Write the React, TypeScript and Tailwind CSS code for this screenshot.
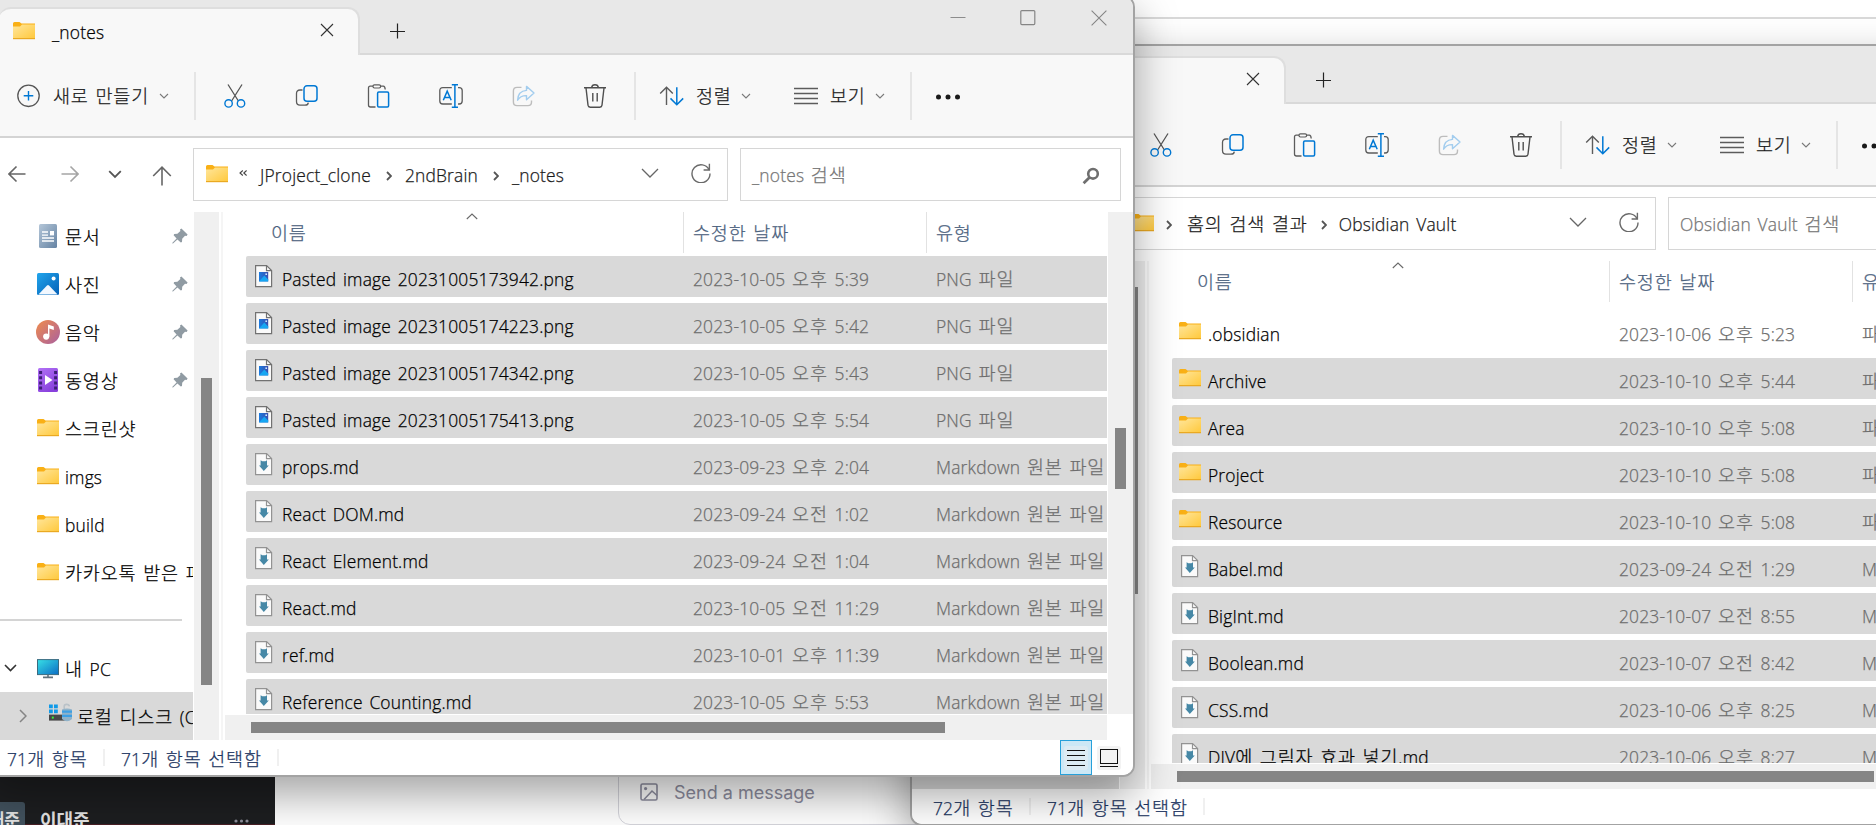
import { ReactNode } from "react";

type FileRow = {
  name: string;
  date: string;
  type: string;
  icon: "png" | "md" | "folder";
  selected: boolean;
};

const notesFiles: FileRow[] = [
  { name: "Pasted image 20231005173942.png", date: "2023-10-05 오후 5:39", type: "PNG 파일", icon: "png", selected: true },
  { name: "Pasted image 20231005174223.png", date: "2023-10-05 오후 5:42", type: "PNG 파일", icon: "png", selected: true },
  { name: "Pasted image 20231005174342.png", date: "2023-10-05 오후 5:43", type: "PNG 파일", icon: "png", selected: true },
  { name: "Pasted image 20231005175413.png", date: "2023-10-05 오후 5:54", type: "PNG 파일", icon: "png", selected: true },
  { name: "props.md", date: "2023-09-23 오후 2:04", type: "Markdown 원본 파일", icon: "md", selected: true },
  { name: "React DOM.md", date: "2023-09-24 오전 1:02", type: "Markdown 원본 파일", icon: "md", selected: true },
  { name: "React Element.md", date: "2023-09-24 오전 1:04", type: "Markdown 원본 파일", icon: "md", selected: true },
  { name: "React.md", date: "2023-10-05 오전 11:29", type: "Markdown 원본 파일", icon: "md", selected: true },
  { name: "ref.md", date: "2023-10-01 오후 11:39", type: "Markdown 원본 파일", icon: "md", selected: true },
  { name: "Reference Counting.md", date: "2023-10-05 오후 5:53", type: "Markdown 원본 파일", icon: "md", selected: true },
];

const vaultFiles: FileRow[] = [
  { name: ".obsidian", date: "2023-10-06 오후 5:23", type: "파일 폴더", icon: "folder", selected: false },
  { name: "Archive", date: "2023-10-10 오후 5:44", type: "파일 폴더", icon: "folder", selected: true },
  { name: "Area", date: "2023-10-10 오후 5:08", type: "파일 폴더", icon: "folder", selected: true },
  { name: "Project", date: "2023-10-10 오후 5:08", type: "파일 폴더", icon: "folder", selected: true },
  { name: "Resource", date: "2023-10-10 오후 5:08", type: "파일 폴더", icon: "folder", selected: true },
  { name: "Babel.md", date: "2023-09-24 오전 1:29", type: "Markdown 원본 파일", icon: "md", selected: true },
  { name: "BigInt.md", date: "2023-10-07 오전 8:55", type: "Markdown 원본 파일", icon: "md", selected: true },
  { name: "Boolean.md", date: "2023-10-07 오전 8:42", type: "Markdown 원본 파일", icon: "md", selected: true },
  { name: "CSS.md", date: "2023-10-06 오후 8:25", type: "Markdown 원본 파일", icon: "md", selected: true },
  { name: "DIV에 그림자 효과 넣기.md", date: "2023-10-06 오후 8:27", type: "Markdown 원본 파일", icon: "md", selected: true },
];

// hangul is a bit bigger than the latin letters, so the two are split
const T = ({ children, className = "" }: { children: string; className?: string }) => {
  const parts = children.split(/([가-힣]+)/).filter((p) => p !== "");
  return (
    <span className={"whitespace-pre leading-[24px] " + className}>
      {parts.map((p, i) =>
        /[가-힣]/.test(p) ? (
          <span key={i} className="font-['Noto_Sans_CJK_KR',sans-serif] text-[18.5px] leading-[20px] font-light tracking-[0.85px] [-webkit-text-stroke:0.25px]">
            {p}
          </span>
        ) : (
          <span key={i} className="font-['Open_Sans','Noto_Sans',sans-serif] text-[17.4px] leading-[20px] font-light tracking-[0.18px] [word-spacing:2px] [-webkit-text-stroke:0.25px]">
            {p}
          </span>
        )
      )}
    </span>
  );
};

const Icon = ({ w, h, className = "", children }: { w: number; h: number; className?: string; children: ReactNode }) => (
  <svg width={w} height={h} viewBox={`0 0 ${w} ${h}`} fill="none" className={"shrink-0 " + className}>
    {children}
  </svg>
);

const Gradients = () => (
  <svg width="0" height="0" className="absolute">
    <defs>
      <linearGradient id="folder" x1="0" y1="0" x2="1" y2="1">
        <stop offset="0" stopColor="#ffe69c" />
        <stop offset="1" stopColor="#ffc83a" />
      </linearGradient>
      <linearGradient id="doc" x1="0" y1="0" x2="1" y2="1">
        <stop offset="0" stopColor="#b4c6d8" />
        <stop offset="1" stopColor="#6583a3" />
      </linearGradient>
      <linearGradient id="photo" x1="0" y1="0" x2="1" y2="1">
        <stop offset="0" stopColor="#21a5ec" />
        <stop offset="1" stopColor="#0560b6" />
      </linearGradient>
      <linearGradient id="music" x1="0" y1="0" x2="1" y2="1">
        <stop offset="0" stopColor="#f08c4c" />
        <stop offset="1" stopColor="#a9609f" />
      </linearGradient>
      <linearGradient id="video" x1="0" y1="0" x2="0.6" y2="1">
        <stop offset="0" stopColor="#b272f6" />
        <stop offset="1" stopColor="#8840dc" />
      </linearGradient>
      <linearGradient id="pc" x1="0" y1="0" x2="1" y2="1">
        <stop offset="0" stopColor="#37e0e6" />
        <stop offset="1" stopColor="#0b6cc4" />
      </linearGradient>
      <linearGradient id="thumb" x1="0" y1="0" x2="1" y2="0">
        <stop offset="0" stopColor="#1b7be0" />
        <stop offset="1" stopColor="#3a4fae" />
      </linearGradient>
    </defs>
  </svg>
);

const FolderIcon = ({ className = "" }) => (
  <Icon w={22} h={18} className={className}>
    <path d="M0 1.5Q0 0 1.5 0H6.5L8.5 1.6H22V8H0z" fill="#f9b016" />
    <path d="M0 4.5H7L9 2.6H22V17H0z" fill="url(#folder)" />
    <path d="M0 16.6H22" stroke="#eaa922" strokeWidth="1.2" />
  </Icon>
);

const FileIcon = ({ kind }: { kind: "png" | "md" }) => (
  <Icon w={18} h={23}>
    <path d="M.6.6H11.6L16.6 5.6V21.6H.6z" fill="#fafafa" stroke={kind === "png" ? "#727272" : "#939393"} strokeWidth="1.2" />
    <path d="M11.5.8V5.6H16.6" stroke={kind === "png" ? "#727272" : "#939393"} strokeWidth="1.2" />
    {kind === "png" ? (
      <>
        <rect x="4" y="7" width="9.2" height="9.4" fill="url(#thumb)" />
        <path d="M4 16.4L9.3 10.6L13.2 14.4V16.4z" fill="#17a6f2" />
        <circle cx="11.2" cy="9.2" r=".9" fill="#cfe8ff" />
      </>
    ) : (
      <path d="M5.6 7.2L7.3 8.3H10.4L12 7.2V12.4H13.8L8.8 18L4 12.4H5.6z" fill="#4688a6" />
    )}
  </Icon>
);

const CaretDown = ({ className = "" }) => (
  <Icon w={10} h={6} className={className}>
    <path d="M1 1L5 5L9 1" stroke="#7a7a7a" strokeWidth="1.1" />
  </Icon>
);

const Divider = ({ className = "" }) => <div className={"h-[48px] w-[2px] shrink-0 bg-[#e5e5e5] " + className}></div>;

const Crumb = () => (
  <Icon w={6} h={10} className="mt-[3px]">
    <path d="M1 1L5 5L1 9" stroke="#555" strokeWidth="1.8" />
  </Icon>
);

const TitleBar = ({ title }: { title: string }) => (
  <div className="flex h-[58px] shrink-0 border-b-2 border-[#d9d9d9] bg-[#e8e8e8]">
    <div className="mt-[10px] ml-[13px] flex h-[48px] w-[361px] shrink-0 items-start rounded-tl-[12px] rounded-tr-[12px] border-t-2 border-r-2 border-[#dedede] bg-[#f8f8f8]">
      <FolderIcon className="mt-[13px] ml-[14px]" />
      <T className="mt-[12px] ml-[17px] w-[268px] text-black">{title}</T>
      <Icon w={14} h={14} className="mt-[14px]">
        <path d="M1 1L13 13M13 1L1 13" stroke="#333" strokeWidth="1.1" />
      </Icon>
    </div>
    <Icon w={16} h={16} className="mt-[26px] ml-[30px]">
      <path d="M7.5 .5V15.5M0 8.5H15" stroke="#222" strokeWidth="1.2" />
    </Icon>
    <div className="mt-[13px] mr-[26px] ml-auto flex h-[16px] gap-[54px]">
      <Icon w={16} h={16}>
        <path d="M.5 7.5H15.5" stroke="#8c8c8c" />
      </Icon>
      <Icon w={16} h={16}>
        <rect x=".8" y=".6" width="14" height="14" rx="1" stroke="#858585" strokeWidth="1.2" />
      </Icon>
      <Icon w={16} h={16} className="ml-[1px]">
        <path d="M.6 .6L15.4 15.4M15.4 .6L.6 15.4" stroke="#858585" strokeWidth="1.1" />
      </Icon>
    </div>
  </div>
);

const Toolbar = () => (
  <div className="flex h-[83px] shrink-0 items-center border-b-2 border-[#d4d4d4] bg-[#f8f8f8] pl-[31px] text-[#1a1a1a]">
    <Icon w={24} h={24}>
      <circle cx="11.5" cy="11.8" r="10.7" stroke="#555" strokeWidth="1.3" />
      <path d="M11.5 7V16.6M6.7 11.8H16.3" stroke="#0078d4" strokeWidth="1.4" />
    </Icon>
    <T className="mt-[2px] ml-[12px] w-[106px]">새로 만들기</T>
    <CaretDown />
    <Divider className="ml-[25px]" />
    <div className="ml-[27px] flex w-[396px] gap-[48px]">
      <Icon w={24} h={24}>
        <path d="M5 .5L15.4 17M19 .5L8.6 17" stroke="#555" strokeWidth="1.3" />
        <circle cx="5.6" cy="19.4" r="3.7" stroke="#0078d4" strokeWidth="1.4" />
        <circle cx="18" cy="19.4" r="3.7" stroke="#0078d4" strokeWidth="1.4" />
      </Icon>
      <Icon w={24} h={24}>
        <path d="M7.5 6H5Q1.5 6 1.5 9.5V17.5Q1.5 21.2 5 21.2H10Q13 21.2 13.3 18.6" stroke="#5c5c5c" strokeWidth="1.3" />
        <rect x="9" y="1.8" width="13" height="15.5" rx="3" stroke="#0078d4" strokeWidth="1.5" />
      </Icon>
      <Icon w={24} h={24}>
        <path d="M6 2.2H3.2Q1.5 2.2 1.5 4V21Q1.5 23 3.5 23H8.5M13.5 2.2H16.3Q18 2.2 18.2 5.5" stroke="#5c5c5c" strokeWidth="1.3" />
        <rect x="6" y=".8" width="7.6" height="3.2" rx="1.4" stroke="#5c5c5c" strokeWidth="1.2" />
        <rect x="10.6" y="8" width="11" height="15" rx="1.2" stroke="#0078d4" strokeWidth="1.5" />
      </Icon>
      <Icon w={24} h={24}>
        <path d="M12.8 3.6H3.8Q.8 3.6 .8 6.6V17Q.8 20 3.8 20H12.8M19 3.6H20.2Q23.2 3.6 23.2 6.6V17Q23.2 20 20.2 20H19" stroke="#5c5c5c" strokeWidth="1.3" />
        <path d="M4.3 16.2L8.2 7.2L12.2 16.2M5.6 13.4H10.8" stroke="#0078d4" strokeWidth="1.5" />
        <path d="M12.8 .8H19M12.8 23.2H19M15.9 .8V23.2" stroke="#0078d4" strokeWidth="1.5" />
      </Icon>
      <Icon w={24} h={24} className="ml-[1px] -mr-[1px]">
        <path d="M9.5 3.4H5Q1.4 3.4 1.4 7V18Q1.4 21.6 5 21.6H16Q19.5 21.6 19.5 18V16.5" stroke="#bdbdbd" strokeWidth="1.4" />
        <path d="M14.5 2.4L22 9L14.5 15.8V11.6Q8.5 11.4 5.6 16.2Q6 7 14.5 6.4z" stroke="#a3cdee" strokeWidth="1.4" strokeLinejoin="round" />
      </Icon>
      <Icon w={24} h={24}>
        <path d="M1 3.8H23M8.6 3.6Q9 .8 12 .8T15.4 3.6M3 4L5 21.2Q5.3 23.2 7.2 23.2H16.8Q18.7 23.2 19 21.2L21 4M9.8 9V17.4M14.2 9V17.4" stroke="#4f4f4f" strokeWidth="1.4" />
      </Icon>
    </div>
    <Divider className="ml-[15px]" />
    <Icon w={26} h={24} className="ml-[23px]">
      <path d="M7.5 21V3.6M1.2 9.6L7.5 3.2L13.8 9.6" stroke="#5c5c5c" strokeWidth="1.4" />
      <path d="M17.8 3.2V20.4M11.5 14.4L17.8 20.8L24.2 14.4" stroke="#0078d4" strokeWidth="1.5" />
    </Icon>
    <T className="mt-[2px] ml-[11px] w-[45px]">정렬</T>
    <CaretDown />
    <Icon w={24} h={24} className="ml-[43px]">
      <path d="M0 4.5H24M0 9.5H24M0 14.5H24M0 19.5H24" stroke="#5c5c5c" strokeWidth="1.4" />
    </Icon>
    <T className="mt-[2px] ml-[12px] w-[45px]">보기</T>
    <CaretDown />
    <Divider className="ml-[25px]" />
    <Icon w={26} h={6} className="mt-[2px] ml-[24px]">
      <circle cx="2.5" cy="3" r="2.5" fill="#1a1a1a" />
      <circle cx="12" cy="3" r="2.5" fill="#1a1a1a" />
      <circle cx="21.5" cy="3" r="2.5" fill="#1a1a1a" />
    </Icon>
  </div>
);

const AddressBar = ({ path, search, fromHome }: { path: string[]; search: string; fromHome?: boolean }) => (
  <div className="flex h-[74px] shrink-0 items-start bg-white pt-[10px]">
    <div className="flex h-[52px] w-[207px] shrink-0 items-center pl-[22px]">
      <Icon w={18} h={18}>
        <path d="M17.5 9H1M8.5 1.5L1 9L8.5 16.5" stroke="#666" strokeWidth="1.6" />
      </Icon>
      <Icon w={18} h={18} className="ml-[35px]">
        <path d="M.5 9H17M9.5 1.5L17 9L9.5 16.5" stroke="#a5a5a5" strokeWidth="1.6" />
      </Icon>
      <Icon w={14} h={9} className="ml-[29px]">
        <path d="M1.2 1.2L7 7L12.8 1.2" stroke="#555" strokeWidth="1.8" />
      </Icon>
      <Icon w={20} h={20} className="mt-[3px] ml-[30px]">
        <path d="M10 19.5V1.4M1.2 10L10 1.2L18.8 10" stroke="#666" strokeWidth="1.6" />
      </Icon>
    </div>
    <div className={"flex h-[53px] shrink-0 items-center border border-[#d6d6d6] pl-[12px] text-[#1a1a1a] " + (fromHome ? "w-[537px]" : "w-[535px]")}>
      <FolderIcon className="mb-[2px]" />
      <div className={"flex h-[24px] items-center " + (fromHome ? "ml-[12px] gap-[15px]" : "ml-[11px] gap-[13px]")}>
        {fromHome ? (
          <Crumb />
        ) : (
          <Icon w={8} h={6} className="-mt-[3px]">
            <path d="M3.8 .5L1 3L3.8 5.5M7.6 .5L4.8 3L7.6 5.5" stroke="#444" strokeWidth="1.1" />
          </Icon>
        )}
        {path.map((p, i) => (
          <div key={p} className={"flex items-center " + (fromHome ? "-mr-[3px] gap-[13px]" : "gap-[15px]")}>
            <T className="mt-[2px]">{p}</T>
            {i < path.length - 1 && <Crumb />}
          </div>
        ))}
      </div>
      <Icon w={18} h={10} className="mr-[32px] mb-[3px] ml-auto">
        <path d="M1 1L9 9L17 1" stroke="#666" strokeWidth="1.3" />
      </Icon>
      <Icon w={20} h={20} className="mr-[16px] mb-[4px]">
        <path d="M18.2 7A9 9 0 1 0 19 10.5M18.4 .8V7H12.6" stroke="#6a6a6a" strokeWidth="1.4" />
      </Icon>
    </div>
    <div className="ml-[12px] flex h-[53px] w-[381px] shrink-0 items-center justify-between border border-[#d6d6d6] pr-[20px] pl-[11px] text-[#767676]">
      <T className="mt-[3px]">{search}</T>
      <Icon w={18} h={18} className="mt-[2px]">
        <circle cx="11" cy="6.8" r="4.8" stroke="#6f6f6f" strokeWidth="2.6" />
        <path d="M7.4 10.6L1.6 16.2" stroke="#6f6f6f" strokeWidth="2.8" />
      </Icon>
    </div>
  </div>
);

const DocIcon = () => (
  <Icon w={24} h={24}>
    <rect x="3" width="18" height="24" rx="1.5" fill="url(#doc)" />
    <path d="M6 8H12M6 11.2H12M6 14H18M6 17H18" stroke="#fff" strokeWidth="1.3" />
    <rect x="14" y="7" width="4" height="4.4" fill="#fff" />
  </Icon>
);

const PhotoIcon = () => (
  <Icon w={24} h={24}>
    <rect x="1" y="1" width="22" height="22" rx="1.5" fill="url(#photo)" />
    <path d="M2.4 22.6L11 13.6Q12 12.6 13 13.6L21.6 22.6z" fill="#f2f8ff" />
    <circle cx="17.6" cy="6.4" r="2" fill="#fff" />
  </Icon>
);

const MusicIcon = () => (
  <Icon w={24} h={24}>
    <circle cx="12" cy="12" r="12" fill="url(#music)" />
    <circle cx="10.2" cy="16.6" r="3.1" fill="#fff" />
    <path d="M12 16.6V4.4L17.8 6.4V10L13.4 8.6V16.6z" fill="#fff" />
  </Icon>
);

const VideoIcon = () => (
  <Icon w={24} h={24}>
    <rect x="2" width="20" height="24" rx="1.5" fill="url(#video)" />
    <path d="M4.6 3V22M19.6 3V22" stroke="#3d1f76" strokeWidth="3" strokeDasharray="3 2.2" />
    <path d="M9 7V17L16.5 12z" fill="#fff" />
  </Icon>
);

const PcIcon = () => (
  <Icon w={24} h={24}>
    <rect x="1.5" y="3.6" width="21" height="15" fill="url(#pc)" stroke="#3a6b80" />
    <path d="M12 19V21M7 21.4H17" stroke="#60717c" strokeWidth="1.6" />
  </Icon>
);

const DiskIcon = () => (
  <Icon w={24} h={24}>
    <path d="M1 2.4H4.8V6.2H1zM6 2.4H9.8V6.2H6zM1 7.4H4.8V11.2H1zM6 7.4H9.8V11.2H6z" fill="#109ae8" />
    <path d="M1 12.6H18V18.6H1z" fill="#474747" />
    <rect x="3.8" y="14.6" width="2" height="2" fill="#3af03a" />
    <path d="M16.2 7V4.4Q16.2 2.4 18.6 2.4T21.4 4.4" stroke="#b9c2c8" strokeWidth="1.6" />
    <path d="M14 7.6Q19 5.6 24 7.6V17Q19 21.6 14 17z" fill="#8fb2c9" />
    <path d="M14 9.6H24M14 13.8H24" stroke="#3c9fe4" strokeWidth="2.2" />
  </Icon>
);

const PinIcon = () => (
  <Icon w={16} h={16}>
    <path d="M9.4 .4L15.6 6.4L14.6 8L13 7.8L10.2 10.8L10 14L8.8 14.6L5.4 11.4L1 15.6L.4 15.4L.4 14.8L4.6 10.4L1.6 7.2L2.2 6L5.4 5.8L8.4 3L8 1.4z" fill="#909ba3" />
  </Icon>
);

const quickAccess = [
  { label: "문서", icon: <DocIcon />, pinned: true },
  { label: "사진", icon: <PhotoIcon />, pinned: true },
  { label: "음악", icon: <MusicIcon />, pinned: true },
  { label: "동영상", icon: <VideoIcon />, pinned: true },
  { label: "스크린샷", icon: <FolderIcon className="mx-[1px]" />, pinned: false },
  { label: "imgs", icon: <FolderIcon className="mx-[1px]" />, pinned: false },
  { label: "build", icon: <FolderIcon className="mx-[1px]" />, pinned: false },
  { label: "카카오톡 받은 파일", icon: <FolderIcon className="mx-[1px]" />, pinned: false },
];

const NavPane = () => (
  <div className="flex w-[207px] shrink-0 flex-col overflow-hidden text-black">
    {quickAccess.map((q) => (
      <div key={q.label} className="flex h-[48px] shrink-0 items-center pl-[50px]">
        {q.icon}
        <T className="mt-[3px] ml-[5px] w-[107px] shrink-0">{q.label}</T>
        {q.pinned && <PinIcon />}
      </div>
    ))}
    <div className="flex h-[48px] shrink-0 items-center">
      <div className="mr-[11px] ml-[14px] h-[2px] w-full bg-[#d4d4d4]"></div>
    </div>
    <div className="flex h-[48px] shrink-0 items-center pl-[18px]">
      <Icon w={13} h={8}>
        <path d="M1 1L6.5 6.5L12 1" stroke="#333" strokeWidth="1.6" />
      </Icon>
      <div className="ml-[19px]">
        <PcIcon />
      </div>
      <T className="mt-[3px] ml-[5px]">내 PC</T>
    </div>
    <div className="flex h-[48px] shrink-0 items-center bg-[#d9d9d9] pl-[33px]">
      <Icon w={8} h={14}>
        <path d="M1 1L7 7L1 13" stroke="#858585" strokeWidth="1.5" />
      </Icon>
      <div className="ml-[21px] h-[28px]">
        <DiskIcon />
      </div>
      <T className="mt-[3px] ml-[5px]">로컬 디스크 (C:)</T>
    </div>
  </div>
);

const FileList = ({ files, first }: { files: FileRow[]; first: string }) => (
  <div className="flex h-[502px] min-w-0 flex-1 flex-col overflow-hidden">
    <div className="flex h-[41px] shrink-0 text-[#4a607c]">
      <div className="flex w-[458px] shrink-0 pl-[46px]">
        <T className="mt-[10px] w-[195px]">이름</T>
        <Icon w={12} h={7} className="mt-[1px]">
          <path d="M.8 6L6 1L11.2 6" stroke="#6a6a6a" strokeWidth="1.1" />
        </Icon>
      </div>
      <div className="w-[243px] shrink-0 border-l border-[#e2e2e2] pt-[10px] pl-[9px]">
        <T>수정한 날짜</T>
      </div>
      <div className="shrink-0 border-l border-[#e2e2e2] pt-[10px] pl-[9px]">
        <T>유형</T>
      </div>
    </div>
    <div className={"ml-[21px] flex flex-col gap-[6px] " + first}>
      {files.map((f) => (
        <div
          key={f.name}
          className={"flex h-[41px] shrink-0 items-center overflow-hidden rounded-l-[2px] text-[#6d6d6d] " + (f.selected ? "bg-[#d9d9d9]" : "")}
        >
          <div className="flex w-[36px] shrink-0 pl-[9px]">
            {f.icon === "folder" ? <FolderIcon className="-ml-[2px] mb-[2px]" /> : <FileIcon kind={f.icon} />}
          </div>
          <T className="mt-[7px] w-[411px] shrink-0 text-black">{f.name}</T>
          <T className="mt-[7px] w-[243px] shrink-0">{f.date}</T>
          <T className="mt-[7px] shrink-0">{f.type}</T>
        </div>
      ))}
    </div>
  </div>
);

const StatusBar = ({ total, selected }: { total: string; selected: string }) => (
  <div className="flex h-[35px] shrink-0 items-center bg-white pl-[21px] text-[#1c3561]">
    <T className="mt-[4px] w-[96px]">{total}</T>
    <div className="h-[17px] w-[2px] bg-[#f0f0f0]"></div>
    <T className="mt-[4px] ml-[16px] w-[156px]">{selected}</T>
    <div className="h-[17px] w-[2px] bg-[#f0f0f0]"></div>
    <div className="mr-[12px] ml-auto flex items-center gap-[5px]">
      <div className="flex h-[35px] w-[32px] items-center justify-center border border-[#26a0da] bg-[#cce8f6]">
        <div className="flex h-[24px] w-[24px] items-center justify-center rounded-[3px] bg-[#dcebf3]">
          <Icon w={18} h={18}>
            <path d="M0 1.5H18M0 6.5H18M0 11.5H18M0 16.5H18" stroke="#111" strokeWidth="1" />
          </Icon>
        </div>
      </div>
      <div className="flex h-[24px] w-[24px] items-center justify-center rounded-[3px] bg-[#f3f3f3]">
        <Icon w={18} h={20}>
          <rect x=".5" y="1.5" width="17" height="14" stroke="#111" />
          <path d="M0 18.5H18" stroke="#111" />
        </Icon>
      </div>
    </div>
  </div>
);

type ExplorerProps = {
  className: string;
  title: string;
  path: string[];
  search: string;
  fromHome?: boolean;
  files: FileRow[];
  first: string;
  navThumb: string;
  total: string;
  selected: string;
};

const Explorer = (props: ExplorerProps) => (
  <div
    className={
      "absolute flex h-[782px] flex-col overflow-hidden rounded-[12px] border-2 border-[#a3a3a3] bg-white shadow-[0_18px_44px_rgba(0,0,0,0.36)] " +
      props.className
    }
  >
    <TitleBar title={props.title} />
    <Toolbar />
    <AddressBar path={props.path} search={props.search} fromHome={props.fromHome} />
    <div className="flex h-[528px] shrink-0">
      <NavPane />
      <div className="ml-[1px] w-[25px] shrink-0 bg-[#f0f0f0] pl-[7px]">
        <div className={"w-[11px] bg-[#858585] " + props.navThumb}></div>
      </div>
      <div className="ml-[2px] w-[2px] shrink-0 bg-[#f5f5f5]"></div>
      <div className="flex min-w-0 flex-1 flex-col">
        <div className="flex pl-[2px]">
          <FileList files={props.files} first={props.first} />
          <div className="ml-[1px] w-[25px] shrink-0 bg-[#f0f0f0] pl-[7px]">
            <div className="mt-[216px] h-[61px] w-[11px] bg-[#858585]"></div>
          </div>
        </div>
        <div className="mt-[1px] mr-[26px] ml-[2px] h-[25px] bg-[#f0f0f0] pt-[7px] pl-[26px]">
          <div className={"h-[11px] bg-[#858585] " + (props.fromHome ? "w-[697px]" : "w-[694px]")}></div>
        </div>
      </div>
    </div>
    <StatusBar total={props.total} selected={props.selected} />
  </div>
);

// what is left visible of the apps under the two explorers
const Desktop = () => (
  <div className="flex h-[825px] w-[1876px] flex-col">
    <div className="h-[19px] shrink-0 border-b-2 border-[#d9d9d9]"></div>
    <div className="mt-auto flex h-[60px] shrink-0">
      <div className="flex w-[275px] items-start border-b border-[#4a1f26] bg-[#1d1e20] pt-[37px] font-['Noto_Sans_CJK_KR',sans-serif] text-[18px] leading-[26px] font-bold text-[#e4e4e4]">
        <div className="flex h-[23px] w-[25px] justify-end overflow-hidden rounded-tr-[3px] bg-[#42525e] pt-[4px] pr-[5px] text-[17px] whitespace-nowrap">대준</div>
        <div className="mt-[4px] ml-[15px] w-[194px]">이대준</div>
        <Icon w={15} h={4} className="mt-[17px]">
          <circle cx="2" cy="2" r="1.6" fill="#8d8d99" />
          <circle cx="7.5" cy="2" r="1.6" fill="#8d8d99" />
          <circle cx="13" cy="2" r="1.6" fill="#8d8d99" />
        </Icon>
      </div>
      <div className="ml-[343px] flex w-[420px] items-start rounded-b-[12px] border border-[#d5d5dc] bg-white pt-[16px] pl-[21px] text-[#8e8ea0]">
        <Icon w={18} h={18} className="mt-[1px]">
          <rect x="1" y="1" width="16" height="16" rx="1.5" stroke="#8e8ea0" strokeWidth="1.6" />
          <circle cx="5.6" cy="5.6" r="1.6" fill="#8e8ea0" />
          <path d="M4 16.5L12 8L17 12.5" stroke="#8e8ea0" strokeWidth="1.6" />
        </Icon>
        <span className="ml-[16px] font-['Inter',sans-serif] text-[18px] leading-[22px]">Send a message</span>
      </div>
    </div>
  </div>
);

const App = () => {
  return (
    <div className="relative h-[825px] w-[1876px] overflow-hidden bg-white">
      <Gradients />
      <Desktop />
      <Explorer
        className="top-[44px] left-[910px] w-[1153px]"
        title="Obsidian Vault"
        path={["홈의 검색 결과", "Obsidian Vault"]}
        search="Obsidian Vault 검색"
        fromHome
        files={vaultFiles}
        first="mt-[9px]"
        navThumb="mt-[26px] h-[307px]"
        total="72개 항목"
        selected="71개 항목 선택함"
      />
      <Explorer
        className="-top-[5px] -left-[16px] w-[1151px]"
        title="_notes"
        path={["JProject_clone", "2ndBrain", "_notes"]}
        search="_notes 검색"
        files={notesFiles}
        first="mt-[3px]"
        navThumb="mt-[166px] h-[307px]"
        total="71개 항목"
        selected="71개 항목 선택함"
      />
    </div>
  );
};

export default App;
